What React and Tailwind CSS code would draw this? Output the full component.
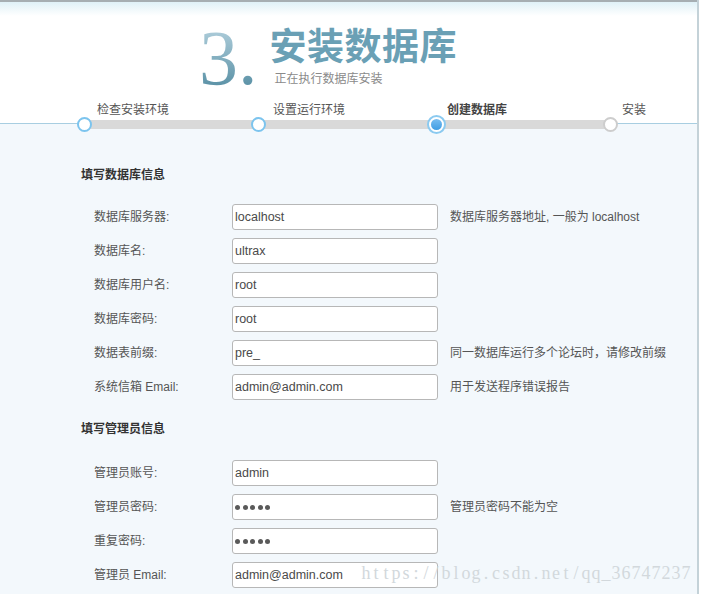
import React from "react";

const F = "font-['Liberation_Sans','Noto_Sans_CJK_SC',sans-serif]";

function Dots() {
  return (
    <div className="flex items-center gap-[2.5px]">
      {[0, 1, 2, 3, 4].map((i) => (
        <span key={i} className="block w-[5px] h-[5px] rounded-full bg-[#5a5a5a]" />
      ))}
    </div>
  );
}

function Row({ label, value, hint, password }) {
  return (
    <div className="flex items-center h-[26px]">
      <div className="w-[138px] pl-[94px] box-content shrink-0 text-[12px] text-[#555] whitespace-nowrap">{label}</div>
      <div className="w-[206px] h-[26px] shrink-0 bg-white border border-[#b7b7b7] rounded-[3px] flex items-center pl-[2px] text-[12.5px] text-[#4a4a4a] font-['Liberation_Sans',sans-serif]">
        {password ? <Dots /> : value}
      </div>
      {hint && <div className="ml-[12px] text-[12px] text-[#555] whitespace-nowrap">{hint}</div>}
    </div>
  );
}

function Heading({ children, className }) {
  return (
    <div className={"pl-[81px] h-[16px] leading-[16px] text-[12px] font-bold text-[#333] " + className}>{children}</div>
  );
}

export default function App() {
  const wm = "https://blog.csdn.net/qq_36747237".split("");
  return (
    <div className={"w-[702px] h-[594px] bg-white overflow-hidden relative " + F}>
      <div className="w-[699px] h-full border-r-2 border-[#c4d2d8] flex flex-col">
        <div className="h-[2px] shrink-0 bg-[#a6aeb2]" />
        <div className="bg-[linear-gradient(to_bottom,#dff1f7_0px,#ffffff_14px)] shrink-0">
          <div className="flex items-start pt-[17px] pl-[199px] h-[95px]">
            <span className="text-[78px] leading-[78px] font-['Liberation_Serif',serif] bg-[linear-gradient(to_bottom,#bcd7e3,#4c879d)] bg-clip-text text-transparent">
              3.
            </span>
            <div className="ml-[12px] mt-[7px] flex flex-col">
              <div className="text-[37px] leading-[37px] font-bold text-[#6aa0b5] tracking-[0.5px] font-['Noto_Sans_CJK_SC',sans-serif]">安装数据库</div>
              <div className="mt-[10px] ml-[5px] text-[12px] leading-[12px] text-[#8a8a8a]">正在执行数据库安装</div>
            </div>
          </div>
          <div className="flex mt-[7px] h-[12px] leading-[12px] text-[12px] text-[#555] pl-[97px]">
            <div className="w-[176px]">检查安装环境</div>
            <div className="w-[174px]">设置运行环境</div>
            <div className="w-[175px] font-bold text-[#444]">创建数据库</div>
            <div>安装</div>
          </div>
        </div>
        <div className="h-[16px] shrink-0 flex items-center bg-[linear-gradient(to_bottom,#ffffff_7px,#a8cee1_7px,#a8cee1_8px,#f3f8fc_8px)]">
          <div className="w-[77px] shrink-0" />
          <div className="w-[15px] h-[15px] shrink-0 rounded-full border-2 border-[#7cc4ee] bg-white z-10" />
          <div className="w-[163px] h-[9px] shrink-0 bg-[#d9d9d9] mx-[-2px]" />
          <div className="w-[15px] h-[15px] shrink-0 rounded-full border-2 border-[#7cc4ee] bg-white z-10" />
          <div className="w-[165px] h-[9px] shrink-0 bg-[#d9d9d9] mx-[-2px]" />
          <div className="w-[19px] h-[19px] shrink-0 rounded-full border-2 border-[#8bcaf0] bg-white p-[2px] z-10">
            <div className="w-full h-full rounded-full bg-[linear-gradient(to_bottom,#78bdf0,#3f9de3)]" />
          </div>
          <div className="w-[161px] h-[9px] shrink-0 bg-[#d9d9d9] mx-[-2px]" />
          <div className="w-[15px] h-[15px] shrink-0 rounded-full border-2 border-[#cdcdcd] bg-white z-10" />
        </div>
        <div className="flex-1 bg-[#f3f8fc] pt-[35px]">
          <Heading>填写数据库信息</Heading>
          <div className="mt-[21px] flex flex-col gap-[8px]">
            <Row label="数据库服务器:" value="localhost" hint="数据库服务器地址, 一般为 localhost" />
            <Row label="数据库名:" value="ultrax" />
            <Row label="数据库用户名:" value="root" />
            <Row label="数据库密码:" value="root" />
            <Row label="数据表前缀:" value="pre_" hint="同一数据库运行多个论坛时，请修改前缀" />
            <Row label="系统信箱 Email:" value="admin@admin.com" hint="用于发送程序错误报告" />
          </div>
          <Heading className="mt-[21px]">填写管理员信息</Heading>
          <div className="mt-[23px] flex flex-col gap-[8px]">
            <Row label="管理员账号:" value="admin" />
            <Row label="管理员密码:" password hint="管理员密码不能为空" />
            <Row label="重复密码:" password />
            <Row label="管理员 Email:" value="admin@admin.com" />
          </div>
        </div>
      </div>
      <div className="absolute left-[361px] top-[564px] flex text-[18px] leading-[18px] text-[#d2d8dc] font-['Liberation_Serif',serif] pointer-events-none">
        {wm.map((c, i) => (
          <span key={i} className="inline-block w-[10px] text-center">{c}</span>
        ))}
      </div>
    </div>
  );
}
